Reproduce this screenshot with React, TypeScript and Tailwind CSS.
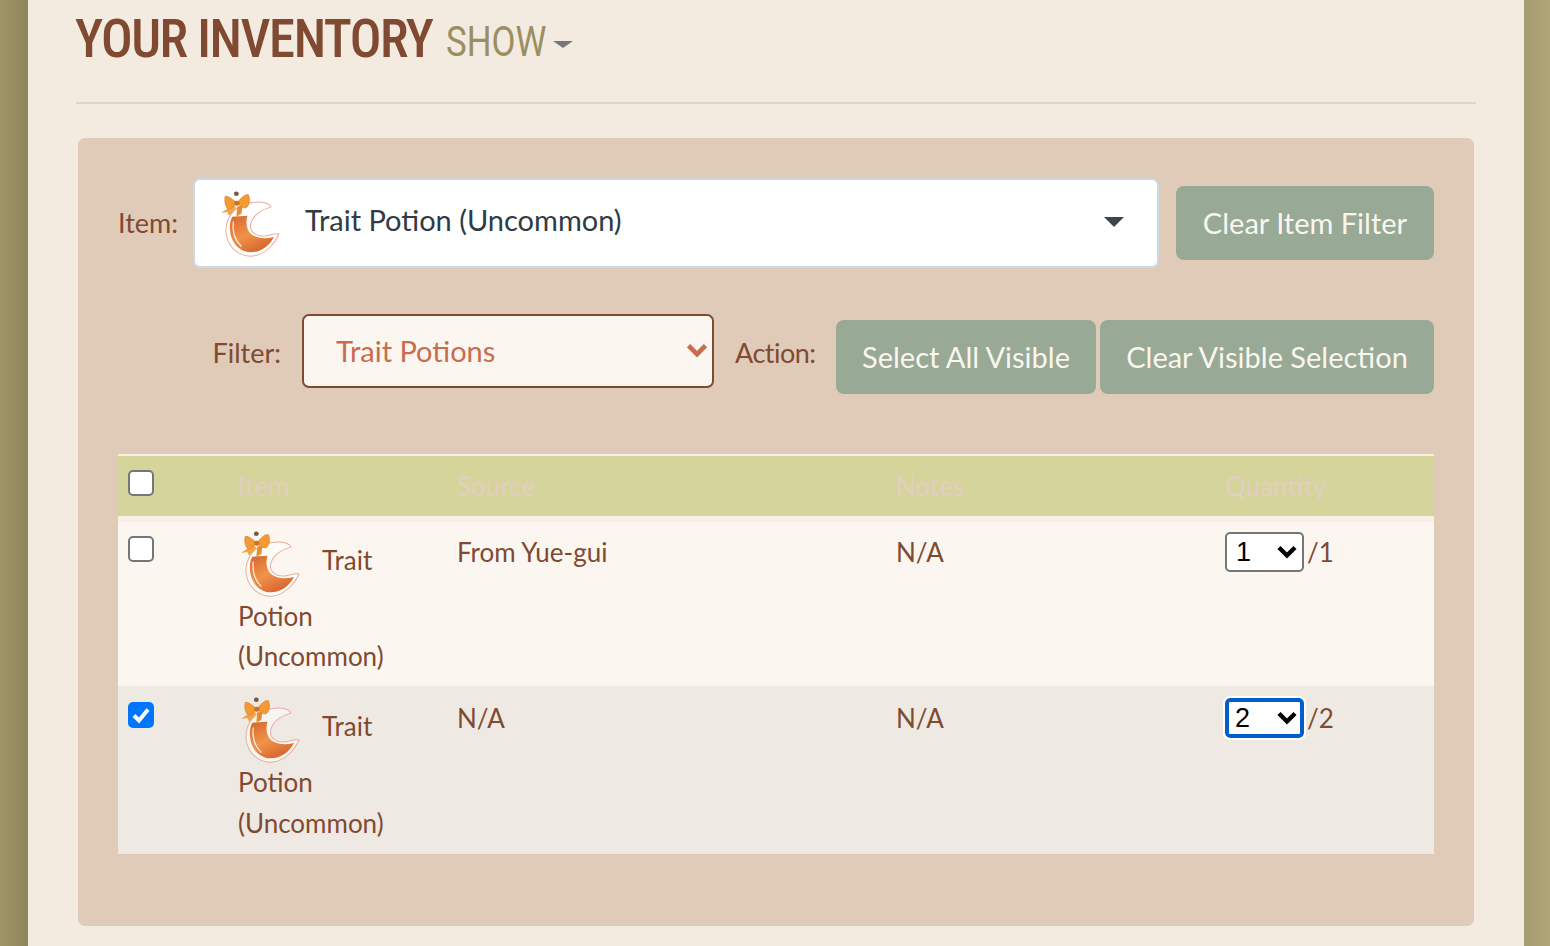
import React from 'react';

const PotionIcon: React.FC<{ id: string; className?: string }> = ({ id, className }) => (
  <svg viewBox="0 0 70 75" preserveAspectRatio="none" className={className}>
    <defs>
      <linearGradient id={id} x1="0" y1="0" x2="0.6" y2="1">
        <stop offset="0" stopColor="#d9652c" />
        <stop offset="0.55" stopColor="#f0934a" />
        <stop offset="1" stopColor="#d8662f" />
      </linearGradient>
    </defs>
    {/* flask */}
    <path
      d="M16 31C21 22 30 18 40 17C48 16 55 18 56 22C48 24 38 30 36 40C35 48 42 53 50 52C56 51 61 49 64 50C60 60 50 72 38 73C26 74 14 65 12 50C11 42 13 36 16 31Z"
      fill="#ffffff"
      fillOpacity="0.55"
      stroke="#e9ae98"
      strokeWidth="1"
    />
    <path
      d="M18 32L33 31C31 38 32 47 38 51C44 55 52 55 59 53C55 62 46 69 36 69C26 69 17 60 16 48C15 42 16 36 18 32Z"
      fill={`url(#${id})`}
    />
    <path d="M19 37C18 46 20 56 27 63" fill="none" stroke="#ffffff" strokeOpacity="0.8" strokeWidth="1.3" />
    {/* stopper and bow */}
    <circle cx="22" cy="8" r="2.4" fill="#7a5a3c" />
    <path d="M19 19L7 28L13 27L15 31L22 23Z" fill="#f2a544" />
    <path d="M23 21L22 32L27 29L28 21Z" fill="#e58d30" />
    <path d="M22 17C16 12 13 10 11 11C10 16 11 22 14 24C17 24 20 21 22 17Z" fill="#f39a33" stroke="#c9741f" strokeWidth="0.5" />
    <path d="M23 17C27 12 31 8 34 9C36 14 35 21 31 23C28 23 25 21 23 17Z" fill="#f39a33" stroke="#c9741f" strokeWidth="0.5" />
    <circle cx="22.5" cy="18" r="2.6" fill="#c9741f" />
  </svg>
);

const Chevron: React.FC<{ className?: string }> = ({ className }) => (
  <svg viewBox="0 0 20 14" className={className}>
    <path d="M3 3L10 10L17 3" fill="none" stroke="currentColor" strokeWidth="3.8" />
  </svg>
);

const CheckBox: React.FC<{ checked?: boolean }> = ({ checked }) => (
  <span className="relative block w-[26px] h-[26px]">
    <input
      type="checkbox"
      defaultChecked={checked}
      className="block appearance-none w-[26px] h-[26px] bg-white border-2 border-[#767676] rounded-[5px] checked:bg-[#0075ff] checked:border-[#0075ff]"
    />
    {checked && (
      <svg viewBox="0 0 26 26" className="absolute inset-0 w-[26px] h-[26px] pointer-events-none">
        <path d="M6 13.5L11 18.5L20 7.5" fill="none" stroke="#ffffff" strokeWidth="4" />
      </svg>
    )}
  </span>
);

const QuantitySelect: React.FC<{ value: number; focused?: boolean }> = ({ value, focused }) => (
  <span className="relative inline-block align-top">
    <select
      defaultValue={value}
      className={`appearance-none block w-[79px] h-[40px] bg-white text-black text-[27px] leading-none font-['Liberation_Sans',sans-serif] rounded-[5px] ${
        focused
          ? 'border-[4px] border-[#005fcc] pl-[6px] outline-2 outline-white'
          : 'border-2 border-[#767676] pl-[9px]'
      }`}
    >
      {Array.from({ length: value }, (_, i) => (
        <option key={i} value={i + 1}>
          {i + 1}
        </option>
      ))}
    </select>
    <Chevron className="absolute right-[5px] top-[12px] w-[24px] h-[16px] text-black pointer-events-none" />
  </span>
);

const ItemCell: React.FC<{ id: string }> = ({ id }) => (
  <>
    <PotionIcon id={id} className="inline-block align-middle w-[71px] h-[72px] -ml-[4px] mr-[17px] -mt-[4px] -mb-[2px]" />
    Trait Potion (Uncommon)
  </>
);

const ActionButton: React.FC<{ label: string; className?: string }> = ({ label, className }) => (
  <button className={`h-[74px] rounded-[8px] bg-[#98a996] text-[#faf6ef] text-[29px] ${className ?? ''}`}>
    {label}
  </button>
);

export default function App() {
  return (
    <div className="h-[946px] overflow-hidden flex bg-[#a89d70] font-['Lato',sans-serif] text-[#804a32]">
      <div className="w-[28px] shrink-0 bg-gradient-to-r from-[#a09566] to-[#8f8559]" />

      <main className="flex-1 min-w-0 bg-[#f3ebe0] px-[48px] pt-[9px]">
        <div className="flex items-baseline h-[95px] border-b-2 border-[#ddd5c8]">
          <h1 className="-ml-px font-['Roboto',sans-serif] font-medium text-[54px] leading-[60px] tracking-[-1.5px] [font-stretch:75%] origin-left scale-x-[0.975] w-[359px] whitespace-nowrap uppercase text-[#804a32]">
            Your Inventory
          </h1>
          <span className="ml-[12px] font-['Roboto',sans-serif] text-[43px] leading-[60px] text-[#9a8f62] origin-left scale-x-[0.81] -translate-y-px w-[100px] whitespace-nowrap">
            SHOW
          </span>
          <span className="self-start mt-[32px] ml-[7px] w-0 h-0 border-x-[10px] border-x-transparent border-t-[7px] border-t-[#777777]" />
        </div>

        <section className="mt-[34px] mx-[2px] h-[788px] bg-[#e0cbb8] rounded-[7px] px-[40px] pt-[40px] text-[26px]">
          <div className="flex items-center h-[90px]">
            <span className="w-[75px] text-[27px] leading-none -mt-px">Item:</span>
            <div className="w-[966px] h-[90px] bg-white border-2 border-[#cdd8e6] rounded-[7px] flex items-center pl-[22px] pr-[33px] text-[#2f3b45] text-[29px]">
              <PotionIcon id="potion-select" className="w-[71px] h-[72px] -mt-[3px] -ml-[3px]" />
              <span className="ml-[20px] -mt-[6px] flex-1">Trait Potion (Uncommon)</span>
              <span className="-mt-[3px] w-0 h-0 border-x-[10px] border-x-transparent border-t-[10px] border-t-[#3c4650]" />
            </div>
            <ActionButton label="Clear Item Filter" className="ml-[17px] w-[258px]" />
          </div>

          <div className="flex items-start justify-end mt-[46px] h-[80px] text-[27px]">
            <span className="mt-[25px] leading-none">Filter:</span>
            <div className="relative ml-[21px]">
              <select
                defaultValue="Trait Potions"
                className="appearance-none block w-[412px] h-[74px] bg-[#fbf6f0] border-2 border-[#804a32] rounded-[7px] pl-[32px] text-[#c96c4e] text-[29px]"
              >
                <option>Trait Potions</option>
              </select>
              <Chevron className="absolute right-[4px] top-[28px] w-[26px] h-[17px] text-[#c96c4e] pointer-events-none" />
            </div>
            <span className="ml-[21px] mt-[25px] w-[80px] whitespace-nowrap tracking-[-0.5px] leading-none">Action:</span>
            <ActionButton label="Select All Visible" className="ml-[21px] w-[260px] mt-[6px]" />
            <ActionButton label="Clear Visible Selection" className="ml-[4px] w-[334px] mt-[6px]" />
          </div>

          <table className="mt-[60px] w-full table-fixed border-separate border-spacing-0">
            <colgroup>
              <col className="w-[110px]" />
              <col className="w-[219px]" />
              <col className="w-[439px]" />
              <col className="w-[329px]" />
              <col className="w-[219px]" />
            </colgroup>
            <thead>
              <tr className="bg-[#d5d49b] text-[#e2cfc0] text-left">
                <th className="h-[62px] border-t-2 border-[#f6f0e6] pl-[10px] pt-[14px] align-top">
                  <CheckBox />
                </th>
                <th className="border-t-2 border-[#f6f0e6] pl-[10px] font-normal">Item</th>
                <th className="border-t-2 border-[#f6f0e6] pl-[10px] font-normal">Source</th>
                <th className="border-t-2 border-[#f6f0e6] pl-[10px] font-normal">Notes</th>
                <th className="border-t-2 border-[#f6f0e6] pl-[10px] font-normal">Quantity</th>
              </tr>
            </thead>
            <tbody>
              <tr className="bg-[#fbf6f0] align-top">
                <td className="h-[170px] border-t-[6px] border-[#f6f0e6] pl-[10px] pt-[14px]">
                  <CheckBox />
                </td>
                <td className="border-t-[6px] border-[#f6f0e6] pl-[10px] pt-[8px] leading-[40px]">
                  <ItemCell id="potion-row-1" />
                </td>
                <td className="border-t-[6px] border-[#f6f0e6] pl-[10px] pt-[10px] leading-[40px]">From Yue-gui</td>
                <td className="border-t-[6px] border-[#f6f0e6] pl-[10px] pt-[10px] leading-[40px]">N/A</td>
                <td className="border-t-[6px] border-[#f6f0e6] pl-[10px] pt-[10px] leading-[40px]">
                  <QuantitySelect value={1} />
                  <span className="ml-[3px]">/1</span>
                </td>
              </tr>
              <tr className="bg-[#eee9e2] align-top">
                <td className="h-[168px] pl-[10px] pt-[16px]">
                  <CheckBox checked />
                </td>
                <td className="pl-[10px] pt-[10px] leading-[41px]">
                  <ItemCell id="potion-row-2" />
                </td>
                <td className="pl-[10px] pt-[12px] leading-[40px]">N/A</td>
                <td className="pl-[10px] pt-[12px] leading-[40px]">N/A</td>
                <td className="pl-[10px] pt-[12px] leading-[40px]">
                  <QuantitySelect value={2} focused />
                  <span className="ml-[3px]">/2</span>
                </td>
              </tr>
            </tbody>
          </table>
        </section>
      </main>

      <div className="w-[26px] shrink-0 bg-gradient-to-r from-[#a59b70] to-[#b0a67a]" />
    </div>
  );
}
